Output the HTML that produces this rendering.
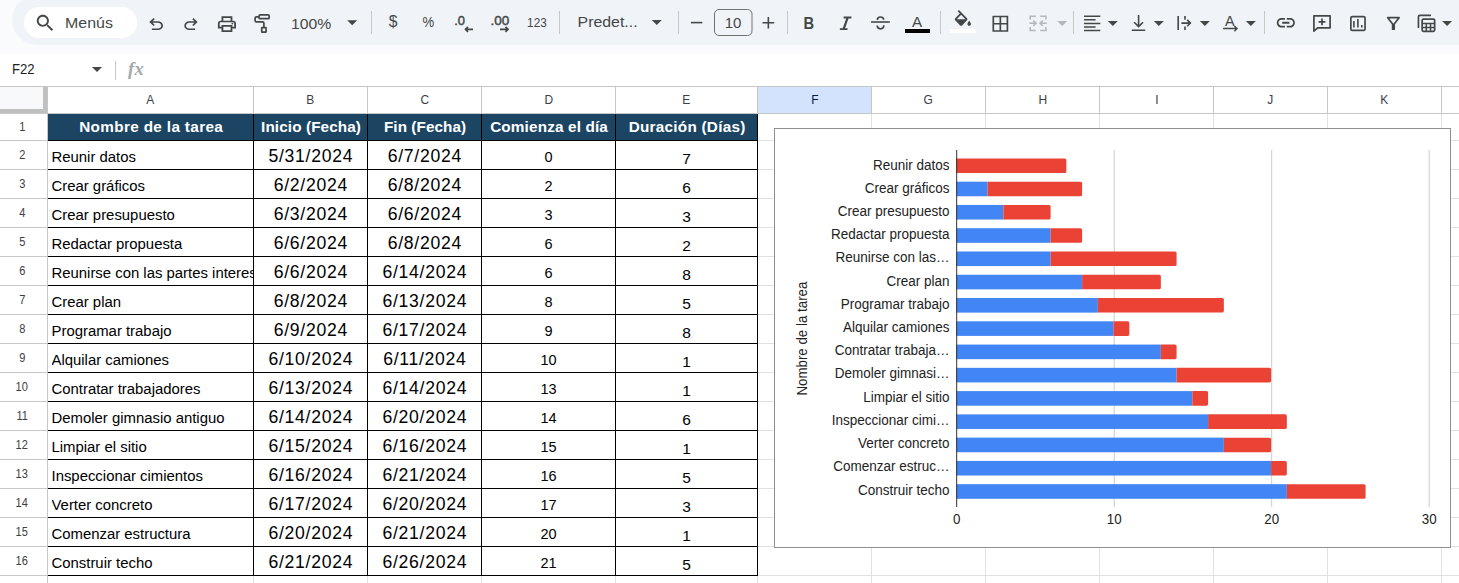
<!DOCTYPE html><html lang="es"><head><meta charset="utf-8"><title>Hoja</title><style>
*{box-sizing:border-box;margin:0;padding:0}
html,body{width:1459px;height:583px;overflow:hidden;background:#fff}
body{position:relative;font-family:"Liberation Sans",sans-serif;color:#000}
.abs{position:absolute}
#topbg{left:0;top:0;width:1459px;height:54px;background:#f9fbfd}
#pill{left:12px;top:-5.5px;width:1500px;height:50px;border-radius:25px;background:#f0f4f9}
#search{left:24px;top:7px;width:113px;height:31px;border-radius:16px;background:#fff}
.tb{position:absolute;color:#444746;font-size:14px;line-height:20px;top:13px;white-space:nowrap}
.sep{position:absolute;top:12px;width:1px;height:22px;background:#c7c7c7}
.ic{position:absolute;overflow:visible}
#fbar{left:0;top:54px;width:1459px;height:32px;background:#fff}
.colh{position:absolute;top:87px;height:26px;font-size:13px;line-height:26px;text-align:center;color:#3c4043;border-right:1px solid #c4c7c5;background:#fff}
.sq{display:inline-block;transform:scaleX(0.92)}
.rowh{position:absolute;left:0;width:47px;padding-right:3px;font-size:12px;text-align:center;color:#3c4043;background:#fff;border-bottom:1px solid #c4c7c5}
.gv{position:absolute;width:1px;background:#e1e1e1}
.gh{position:absolute;height:1px;background:#e1e1e1}
.cell{position:absolute;white-space:nowrap;overflow:hidden}
.hd{background:#1c4563;color:#fff;font-weight:bold;text-align:center}
.bl{position:absolute;background:#000}
</style></head><body>
<div class="abs" id="topbg"></div><div class="abs" id="pill"></div><div class="abs" id="search"></div>
<svg class="abs" style="left:0;top:0" width="1459" height="54" viewBox="0 0 1459 54" font-family="Liberation Sans, sans-serif"><path transform="translate(34.004,12.038) scale(0.93196,0.92053)" d="M15.5 14h-.79l-.28-.27C15.41 12.590 16 11.110 16 9.500 16 5.910 13.090 3 9.500 3S3 5.910 3 9.500 5.910 16 9.500 16c1.610 0 3.090-.590 4.230-1.570l.27.280v.790l5 4.990L20.490 19l-4.990-5zm-6 0C7.010 14 5 11.990 5 9.500S7.010 5 9.500 5 14 7.010 14 9.500 11.990 14 9.500 14z" fill="#444746" /><text x="65.1" y="28" font-size="15px" font-weight="normal" text-anchor="start" fill="#444746" textLength="47.8" lengthAdjust="spacingAndGlyphs" >Menús</text><path transform="translate(145.875,34.133) scale(0.02141,0.02017)" d="M280-200v-80h284q63 0 109.5-40T720-420q0-60-46.500-100T564-560H312l104 104-56 56-200-200 200-200 56 56-104 104h252q97 0 166.500 63T800-420q0 94-69.500 157T564-200H280Z" fill="#444746" /><path transform="translate(180.975,34.133) scale(0.02078,0.02017)" d="M396-200q-97 0-166.500-63T160-420q0-94 69.500-157T396-640h252L544-744l56-56 200 200-200 200-56-56 104-104H396q-63 0-109.500 40T240-420q0 60 46.500 100T396-280h284v80H396Z" fill="#444746" /><path transform="translate(216.090,34.500) scale(0.02262,0.02167)" d="M640-640v-120H320v120h-80v-200h480v200h-80Zm-480 80h640-640Zm560 100q17 0 28.500-11.500T760-500q0-17-11.500-28.500T720-540q-17 0-28.500 11.500T680-500q0 17 11.500 28.500T720-460Zm-80 260v-160H320v160h320Zm80 80H240v-160H80v-240q0-51 35-85.500t85-34.500h560q51 0 85.500 34.500T880-520v240H720v160Zm80-240v-160q0-17-11.500-28.500T760-560H200q-17 0-28.500 11.500T160-520v160h80v-80h480v80h80Z" fill="#444746" /><rect x="259.05" y="14.95" width="10.1" height="3.7" rx="1" fill="none" stroke="#444746" stroke-width="1.7"/><path d="M259 16.8H256.5Q255.1 16.8 255.1 18.2V20.5Q255.1 21.9 256.5 21.9H262.5Q263.9 21.9 263.9 23.3V27" fill="none" stroke="#444746" stroke-width="1.7" /><rect x="261.75" y="27.6" width="4.3" height="4.6" rx="0.4" fill="none" stroke="#444746" stroke-width="1.7"/><text x="291" y="28.8" font-size="15px" font-weight="normal" text-anchor="start" fill="#444746" textLength="40.3" lengthAdjust="spacingAndGlyphs" >100%</text><path d="M347.2 20.3h10l-5.0 5z" fill="#444746"/><rect x="371" y="11" width="1" height="23" fill="#c7c7c7"/><text x="393" y="27.2" font-size="15.6px" font-weight="normal" text-anchor="middle" fill="#444746" >$</text><text x="422.6" y="27" font-size="15.3px" font-weight="normal" text-anchor="start" fill="#444746" textLength="11.7" lengthAdjust="spacingAndGlyphs" >%</text><text x="454.2" y="25" font-size="13.4px" font-weight="normal" text-anchor="start" fill="#444746" textLength="10.8" lengthAdjust="spacingAndGlyphs" stroke="#444746" stroke-width="0.45">.0</text><path d="M473 29.3H465.5M468 26.8L465.5 29.3L468 31.8" fill="none" stroke="#444746" stroke-width="1.7" /><text x="490.5" y="25" font-size="13.4px" font-weight="normal" text-anchor="start" fill="#444746" textLength="18.8" lengthAdjust="spacingAndGlyphs" stroke="#444746" stroke-width="0.45">.00</text><path d="M500 29.3H508M505.5 26.8L508 29.3L505.5 31.8" fill="none" stroke="#444746" stroke-width="1.7" /><text x="527.1" y="26.7" font-size="13px" font-weight="normal" text-anchor="start" fill="#444746" textLength="19.7" lengthAdjust="spacingAndGlyphs" >123</text><rect x="559" y="11" width="1" height="23" fill="#c7c7c7"/><text x="577.6" y="26.9" font-size="15px" font-weight="normal" text-anchor="start" fill="#444746" textLength="60" lengthAdjust="spacingAndGlyphs" >Predet...</text><path d="M651.8 20.1h10l-5.0 5z" fill="#444746"/><rect x="678" y="11" width="1" height="23" fill="#c7c7c7"/><path d="M690.9 22.6H702.3" fill="none" stroke="#444746" stroke-width="1.6" /><rect x="714.5" y="9.5" width="37.5" height="26" rx="4.5" fill="none" stroke="#6f7271" stroke-width="1"/><text x="733.1" y="28" font-size="15px" font-weight="normal" text-anchor="middle" fill="#444746" >10</text><path d="M762.5 22.8H774.2M768.35 17V28.6" fill="none" stroke="#444746" stroke-width="1.6" /><rect x="787" y="11" width="1" height="23" fill="#c7c7c7"/><text x="803.4" y="28.6" font-size="16px" font-weight="bold" text-anchor="start" fill="#444746" textLength="10.6" lengthAdjust="spacingAndGlyphs" >B</text><path d="M843.6 17.5H851.4M839.9 29.2H847.5" fill="none" stroke="#444746" stroke-width="1.8" /><path d="M847.7 17.5L843.6 29.2" fill="none" stroke="#444746" stroke-width="2.2" /><path d="M871 22H889.8" fill="none" stroke="#444746" stroke-width="1.6" /><path d="M883.6 19.7C883.6 17.9 882.3 17 880.4 17C878.5 17 877.4 18 877.4 19.9" fill="none" stroke="#444746" stroke-width="1.7" /><path d="M877.2 25.6C877.2 27.7 878.5 28.8 880.5 28.8C882.5 28.8 883.8 27.7 883.8 25.3" fill="none" stroke="#444746" stroke-width="1.7" /><text x="917.1" y="26.6" font-size="15.2px" font-weight="normal" text-anchor="middle" fill="#444746" >A</text><rect x="905" y="29" width="25" height="4" fill="#000"/><rect x="940" y="11" width="1" height="23" fill="#c7c7c7"/><path transform="translate(952.100,9.900) scale(0.90000,0.93529)" d="M16.560 8.940L7.620 0 6.210 1.410l2.380 2.380-5.150 5.150c-.590.590-.590 1.540 0 2.120l5.500 5.500c.290.290.680.440 1.060.440s.770-.150 1.060-.440l5.500-5.500c.590-.580.590-1.530 0-2.120zM5.210 10L10 5.210 14.790 10H5.210zM19 11.500s-2 2.170-2 3.500c0 1.100.900 2 2 2s2-.900 2-2c0-1.330-2-3.500-2-3.500z" fill="#444746" /><rect x="950" y="29" width="26" height="4" fill="#fff"/><path d="M993.3 16.5H1007.4V31H993.3ZM1000.35 16.5V31M993.3 23.75H1007.4" fill="none" stroke="#444746" stroke-width="1.7" /><path d="M1035.8 16.2H1030.2V19.6M1030.2 27V30.5H1035.8M1029.3 23.3H1036M1033.3 20.6L1036 23.3L1033.3 26" fill="none" stroke="#b4b8bb" stroke-width="1.6" /><path d="M1040.3 16.2H1045.9V19.6M1045.9 27V30.5H1040.3M1046.8 23.3H1040.1M1042.8 20.6L1040.1 23.3L1042.8 26" fill="none" stroke="#b4b8bb" stroke-width="1.6" /><path d="M1057.2 20.9h10l-5.0 5z" fill="#b4b8bb"/><rect x="1073" y="11" width="1" height="23" fill="#c7c7c7"/><path d="M1084 16.3H1100.3M1084 19.85H1095.6M1084 23.4H1100.3M1084 26.95H1095.6M1084 30.5H1100.3" fill="none" stroke="#444746" stroke-width="1.5" /><path d="M1107.8 20.9h10l-5.0 5z" fill="#444746"/><path d="M1138.6 15V26.5M1134.2 22.2L1138.6 26.6L1143 22.2M1131.8 30.2H1145.3" fill="none" stroke="#444746" stroke-width="1.6" /><path d="M1153.8 20.9h10l-5.0 5z" fill="#444746"/><path d="M1178.2 16V30M1185 16V19.8M1185 26.4V30M1181.4 23.1H1190.3M1187.2 19.9L1190.4 23.1L1187.2 26.3" fill="none" stroke="#444746" stroke-width="1.6" /><path d="M1199.9 20.9h10l-5.0 5z" fill="#444746"/><text x="1229.7" y="25.8" font-size="14.4px" font-weight="normal" text-anchor="middle" fill="#444746" >A</text><path d="M1223.1 28.6H1237M1234.4 26L1237 28.6L1234.4 31.2" fill="none" stroke="#444746" stroke-width="1.5" /><path d="M1245.9 20.9h10l-5.0 5z" fill="#444746"/><rect x="1264" y="11" width="1" height="23" fill="#c7c7c7"/><path transform="translate(1274.990,11.180) scale(0.90500,0.96000)" d="M3.900 12c0-1.710 1.390-3.100 3.100-3.100h4V7H7c-2.760 0-5 2.240-5 5s2.240 5 5 5h4v-1.900H7c-1.710 0-3.100-1.390-3.100-3.100zM8 13h8v-2H8v2zm9-6h-4v1.900h4c1.710 0 3.100 1.390 3.100 3.100s-1.390 3.100-3.100 3.100h-4V17h4c2.760 0 5-2.240 5-5s-2.240-5-5-5z" fill="#444746" /><path d="M1313.9 15.8H1330.1V27.8H1317.6L1313.9 31.2Z" fill="none" stroke="#444746" stroke-width="1.7" stroke-linejoin="round"/><path d="M1318.6 21.8H1325.4M1322 18.4V25.2" fill="none" stroke="#444746" stroke-width="1.7" /><rect x="1350.85" y="16.55" width="14.2" height="13.9" rx="1.5" fill="none" stroke="#444746" stroke-width="1.7"/><path d="M1353.9 21V27.6M1357.9 18.9V27.6M1361.8 24.9V27.6" fill="none" stroke="#444746" stroke-width="1.6" /><path d="M1387.7 17.7H1399.1L1394.2 24V29.2H1392.6V24Z" fill="none" stroke="#444746" stroke-width="1.7" stroke-linejoin="round"/><path d="M1431 15.45H1420Q1418.45 15.45 1418.45 17V28" fill="none" stroke="#444746" stroke-width="1.7" /><rect x="1422.15" y="19.05" width="12.5" height="12.3" rx="1.3" fill="none" stroke="#444746" stroke-width="1.7"/><path d="M1422.2 23.4H1434.6M1422.2 27.4H1434.6M1426.3 23.4V31.3M1430.5 23.4V31.3" fill="none" stroke="#444746" stroke-width="1.5" /><path d="M1442.1 20.9h10l-5.0 5z" fill="#444746"/></svg>
<div class="abs" id="fbar"></div>
<div class="abs" style="left:12px;top:58.5px;font-size:14px;line-height:20px;color:#1f1f1f;transform:scaleX(0.94);transform-origin:0 0">F22</div>
<svg class="ic" style="left:92px;top:67px" width="10" height="5"><path d="M0 0h10l-5 5z" fill="#444746"/></svg>
<div class="abs" style="left:115px;top:61px;width:1px;height:19px;background:#c7c7c7"></div>
<div class="abs" style="left:128px;top:59px;font-family:'Liberation Serif',serif;font-style:italic;font-weight:bold;font-size:18.5px;line-height:20px;color:#a5a8ab;letter-spacing:0.3px">fx</div>
<div class="abs" style="left:0;top:86px;width:1459px;height:1px;background:#c4c7c5"></div>
<div class="abs" style="left:0;top:113px;width:1459px;height:1px;background:#c4c7c5"></div>
<div class="abs" style="left:0;top:87px;width:48px;height:26px;background:#f8f9fa"></div>
<div class="abs" style="left:43px;top:87px;width:4px;height:26px;background:#c0c0c0"></div>
<div class="abs" style="left:0;top:109px;width:47px;height:4px;background:#c0c0c0"></div>
<div class="abs" style="left:47px;top:87px;width:1px;height:496px;background:#c4c7c5"></div>
<div class="colh" style="left:48px;width:206px;"><span class="sq">A</span></div>
<div class="colh" style="left:254px;width:114px;"><span class="sq">B</span></div>
<div class="colh" style="left:368px;width:114px;"><span class="sq">C</span></div>
<div class="colh" style="left:482px;width:134px;"><span class="sq">D</span></div>
<div class="colh" style="left:616px;width:142px;"><span class="sq">E</span></div>
<div class="colh" style="left:758px;width:114px;background:#d3e3fd;color:#041e49;"><span class="sq">F</span></div>
<div class="colh" style="left:872px;width:114px;"><span class="sq">G</span></div>
<div class="colh" style="left:986px;width:114px;"><span class="sq">H</span></div>
<div class="colh" style="left:1100px;width:114px;"><span class="sq">I</span></div>
<div class="colh" style="left:1214px;width:114px;"><span class="sq">J</span></div>
<div class="colh" style="left:1328px;width:114px;"><span class="sq">K</span></div>
<div class="colh" style="left:1442px;width:114px;"><span class="sq">L</span></div>
<div class="rowh" style="top:114px;height:27px;line-height:26px"><span class="sq">1</span></div>
<div class="rowh" style="top:141px;height:29px;line-height:28px"><span class="sq">2</span></div>
<div class="rowh" style="top:170px;height:29px;line-height:28px"><span class="sq">3</span></div>
<div class="rowh" style="top:199px;height:29px;line-height:28px"><span class="sq">4</span></div>
<div class="rowh" style="top:228px;height:29px;line-height:28px"><span class="sq">5</span></div>
<div class="rowh" style="top:257px;height:29px;line-height:28px"><span class="sq">6</span></div>
<div class="rowh" style="top:286px;height:29px;line-height:28px"><span class="sq">7</span></div>
<div class="rowh" style="top:315px;height:29px;line-height:28px"><span class="sq">8</span></div>
<div class="rowh" style="top:344px;height:29px;line-height:28px"><span class="sq">9</span></div>
<div class="rowh" style="top:373px;height:29px;line-height:28px"><span class="sq">10</span></div>
<div class="rowh" style="top:402px;height:29px;line-height:28px"><span class="sq">11</span></div>
<div class="rowh" style="top:431px;height:29px;line-height:28px"><span class="sq">12</span></div>
<div class="rowh" style="top:460px;height:29px;line-height:28px"><span class="sq">13</span></div>
<div class="rowh" style="top:489px;height:29px;line-height:28px"><span class="sq">14</span></div>
<div class="rowh" style="top:518px;height:29px;line-height:28px"><span class="sq">15</span></div>
<div class="rowh" style="top:547px;height:29px;line-height:28px"><span class="sq">16</span></div>
<div class="rowh" style="top:576px;height:29px;line-height:28px"><span class="sq">17</span></div>
<div class="gv" style="left:253px;top:114px;height:469px"></div>
<div class="gv" style="left:367px;top:114px;height:469px"></div>
<div class="gv" style="left:481px;top:114px;height:469px"></div>
<div class="gv" style="left:615px;top:114px;height:469px"></div>
<div class="gv" style="left:757px;top:114px;height:469px"></div>
<div class="gv" style="left:871px;top:114px;height:469px"></div>
<div class="gv" style="left:985px;top:114px;height:469px"></div>
<div class="gv" style="left:1099px;top:114px;height:469px"></div>
<div class="gv" style="left:1213px;top:114px;height:469px"></div>
<div class="gv" style="left:1327px;top:114px;height:469px"></div>
<div class="gv" style="left:1441px;top:114px;height:469px"></div>
<div class="gh" style="left:48px;top:140px;width:1411px"></div>
<div class="gh" style="left:48px;top:169px;width:1411px"></div>
<div class="gh" style="left:48px;top:198px;width:1411px"></div>
<div class="gh" style="left:48px;top:227px;width:1411px"></div>
<div class="gh" style="left:48px;top:256px;width:1411px"></div>
<div class="gh" style="left:48px;top:285px;width:1411px"></div>
<div class="gh" style="left:48px;top:314px;width:1411px"></div>
<div class="gh" style="left:48px;top:343px;width:1411px"></div>
<div class="gh" style="left:48px;top:372px;width:1411px"></div>
<div class="gh" style="left:48px;top:401px;width:1411px"></div>
<div class="gh" style="left:48px;top:430px;width:1411px"></div>
<div class="gh" style="left:48px;top:459px;width:1411px"></div>
<div class="gh" style="left:48px;top:488px;width:1411px"></div>
<div class="gh" style="left:48px;top:517px;width:1411px"></div>
<div class="gh" style="left:48px;top:546px;width:1411px"></div>
<div class="gh" style="left:48px;top:575px;width:1411px"></div>
<div class="gh" style="left:48px;top:604px;width:1411px"></div>
<div class="cell hd" style="left:48px;top:114px;width:206px;height:27px;line-height:25.600000000000023px;font-size:15.3px;letter-spacing:0.35px;text-indent:0.35px">Nombre de la tarea</div>
<div class="cell hd" style="left:254px;top:114px;width:114px;height:27px;line-height:25.600000000000023px;font-size:15.3px;letter-spacing:0.1px;text-indent:0.1px">Inicio (Fecha)</div>
<div class="cell hd" style="left:368px;top:114px;width:114px;height:27px;line-height:25.600000000000023px;font-size:15.3px;letter-spacing:0.05px;text-indent:0.05px">Fin (Fecha)</div>
<div class="cell hd" style="left:482px;top:114px;width:134px;height:27px;line-height:25.600000000000023px;font-size:15.3px;letter-spacing:0.15px;text-indent:0.15px">Comienza el día</div>
<div class="cell hd" style="left:616px;top:114px;width:142px;height:27px;line-height:25.600000000000023px;font-size:15.3px;letter-spacing:0.25px;text-indent:0.25px">Duración (Días)</div>
<div class="cell" style="left:51.5px;top:141px;width:201.5px;height:28px;line-height:33.6px;font-size:14.9px">Reunir datos</div>
<div class="cell" style="left:254px;top:141px;width:113px;height:28px;line-height:31.6px;font-size:17.6px;letter-spacing:0.7px;text-indent:0.7px;text-align:center">5/31/2024</div>
<div class="cell" style="left:368px;top:141px;width:113px;height:28px;line-height:31.6px;font-size:17.6px;letter-spacing:0.7px;text-indent:0.7px;text-align:center">6/7/2024</div>
<div class="cell" style="left:482px;top:141px;width:133px;height:28px;line-height:33.8px;font-size:14.5px;text-align:center">0</div>
<div class="cell" style="left:616px;top:141px;width:141px;height:28px;line-height:35.6px;font-size:15.5px;text-align:center">7</div>
<div class="cell" style="left:51.5px;top:170px;width:201.5px;height:28px;line-height:33.6px;font-size:14.9px">Crear gráficos</div>
<div class="cell" style="left:254px;top:170px;width:113px;height:28px;line-height:31.6px;font-size:17.6px;letter-spacing:0.7px;text-indent:0.7px;text-align:center">6/2/2024</div>
<div class="cell" style="left:368px;top:170px;width:113px;height:28px;line-height:31.6px;font-size:17.6px;letter-spacing:0.7px;text-indent:0.7px;text-align:center">6/8/2024</div>
<div class="cell" style="left:482px;top:170px;width:133px;height:28px;line-height:33.8px;font-size:14.5px;text-align:center">2</div>
<div class="cell" style="left:616px;top:170px;width:141px;height:28px;line-height:35.6px;font-size:15.5px;text-align:center">6</div>
<div class="cell" style="left:51.5px;top:199px;width:201.5px;height:28px;line-height:33.6px;font-size:14.9px">Crear presupuesto</div>
<div class="cell" style="left:254px;top:199px;width:113px;height:28px;line-height:31.6px;font-size:17.6px;letter-spacing:0.7px;text-indent:0.7px;text-align:center">6/3/2024</div>
<div class="cell" style="left:368px;top:199px;width:113px;height:28px;line-height:31.6px;font-size:17.6px;letter-spacing:0.7px;text-indent:0.7px;text-align:center">6/6/2024</div>
<div class="cell" style="left:482px;top:199px;width:133px;height:28px;line-height:33.8px;font-size:14.5px;text-align:center">3</div>
<div class="cell" style="left:616px;top:199px;width:141px;height:28px;line-height:35.6px;font-size:15.5px;text-align:center">3</div>
<div class="cell" style="left:51.5px;top:228px;width:201.5px;height:28px;line-height:33.6px;font-size:14.9px">Redactar propuesta</div>
<div class="cell" style="left:254px;top:228px;width:113px;height:28px;line-height:31.6px;font-size:17.6px;letter-spacing:0.7px;text-indent:0.7px;text-align:center">6/6/2024</div>
<div class="cell" style="left:368px;top:228px;width:113px;height:28px;line-height:31.6px;font-size:17.6px;letter-spacing:0.7px;text-indent:0.7px;text-align:center">6/8/2024</div>
<div class="cell" style="left:482px;top:228px;width:133px;height:28px;line-height:33.8px;font-size:14.5px;text-align:center">6</div>
<div class="cell" style="left:616px;top:228px;width:141px;height:28px;line-height:35.6px;font-size:15.5px;text-align:center">2</div>
<div class="cell" style="left:51.5px;top:257px;width:201.5px;height:28px;line-height:33.6px;font-size:14.9px">Reunirse con las partes interesadas</div>
<div class="cell" style="left:254px;top:257px;width:113px;height:28px;line-height:31.6px;font-size:17.6px;letter-spacing:0.7px;text-indent:0.7px;text-align:center">6/6/2024</div>
<div class="cell" style="left:368px;top:257px;width:113px;height:28px;line-height:31.6px;font-size:17.6px;letter-spacing:0.7px;text-indent:0.7px;text-align:center">6/14/2024</div>
<div class="cell" style="left:482px;top:257px;width:133px;height:28px;line-height:33.8px;font-size:14.5px;text-align:center">6</div>
<div class="cell" style="left:616px;top:257px;width:141px;height:28px;line-height:35.6px;font-size:15.5px;text-align:center">8</div>
<div class="cell" style="left:51.5px;top:286px;width:201.5px;height:28px;line-height:33.6px;font-size:14.9px">Crear plan</div>
<div class="cell" style="left:254px;top:286px;width:113px;height:28px;line-height:31.6px;font-size:17.6px;letter-spacing:0.7px;text-indent:0.7px;text-align:center">6/8/2024</div>
<div class="cell" style="left:368px;top:286px;width:113px;height:28px;line-height:31.6px;font-size:17.6px;letter-spacing:0.7px;text-indent:0.7px;text-align:center">6/13/2024</div>
<div class="cell" style="left:482px;top:286px;width:133px;height:28px;line-height:33.8px;font-size:14.5px;text-align:center">8</div>
<div class="cell" style="left:616px;top:286px;width:141px;height:28px;line-height:35.6px;font-size:15.5px;text-align:center">5</div>
<div class="cell" style="left:51.5px;top:315px;width:201.5px;height:28px;line-height:33.6px;font-size:14.9px">Programar trabajo</div>
<div class="cell" style="left:254px;top:315px;width:113px;height:28px;line-height:31.6px;font-size:17.6px;letter-spacing:0.7px;text-indent:0.7px;text-align:center">6/9/2024</div>
<div class="cell" style="left:368px;top:315px;width:113px;height:28px;line-height:31.6px;font-size:17.6px;letter-spacing:0.7px;text-indent:0.7px;text-align:center">6/17/2024</div>
<div class="cell" style="left:482px;top:315px;width:133px;height:28px;line-height:33.8px;font-size:14.5px;text-align:center">9</div>
<div class="cell" style="left:616px;top:315px;width:141px;height:28px;line-height:35.6px;font-size:15.5px;text-align:center">8</div>
<div class="cell" style="left:51.5px;top:344px;width:201.5px;height:28px;line-height:33.6px;font-size:14.9px">Alquilar camiones</div>
<div class="cell" style="left:254px;top:344px;width:113px;height:28px;line-height:31.6px;font-size:17.6px;letter-spacing:0.7px;text-indent:0.7px;text-align:center">6/10/2024</div>
<div class="cell" style="left:368px;top:344px;width:113px;height:28px;line-height:31.6px;font-size:17.6px;letter-spacing:0.7px;text-indent:0.7px;text-align:center">6/11/2024</div>
<div class="cell" style="left:482px;top:344px;width:133px;height:28px;line-height:33.8px;font-size:14.5px;text-align:center">10</div>
<div class="cell" style="left:616px;top:344px;width:141px;height:28px;line-height:35.6px;font-size:15.5px;text-align:center">1</div>
<div class="cell" style="left:51.5px;top:373px;width:201.5px;height:28px;line-height:33.6px;font-size:14.9px">Contratar trabajadores</div>
<div class="cell" style="left:254px;top:373px;width:113px;height:28px;line-height:31.6px;font-size:17.6px;letter-spacing:0.7px;text-indent:0.7px;text-align:center">6/13/2024</div>
<div class="cell" style="left:368px;top:373px;width:113px;height:28px;line-height:31.6px;font-size:17.6px;letter-spacing:0.7px;text-indent:0.7px;text-align:center">6/14/2024</div>
<div class="cell" style="left:482px;top:373px;width:133px;height:28px;line-height:33.8px;font-size:14.5px;text-align:center">13</div>
<div class="cell" style="left:616px;top:373px;width:141px;height:28px;line-height:35.6px;font-size:15.5px;text-align:center">1</div>
<div class="cell" style="left:51.5px;top:402px;width:201.5px;height:28px;line-height:33.6px;font-size:14.9px">Demoler gimnasio antiguo</div>
<div class="cell" style="left:254px;top:402px;width:113px;height:28px;line-height:31.6px;font-size:17.6px;letter-spacing:0.7px;text-indent:0.7px;text-align:center">6/14/2024</div>
<div class="cell" style="left:368px;top:402px;width:113px;height:28px;line-height:31.6px;font-size:17.6px;letter-spacing:0.7px;text-indent:0.7px;text-align:center">6/20/2024</div>
<div class="cell" style="left:482px;top:402px;width:133px;height:28px;line-height:33.8px;font-size:14.5px;text-align:center">14</div>
<div class="cell" style="left:616px;top:402px;width:141px;height:28px;line-height:35.6px;font-size:15.5px;text-align:center">6</div>
<div class="cell" style="left:51.5px;top:431px;width:201.5px;height:28px;line-height:33.6px;font-size:14.9px">Limpiar el sitio</div>
<div class="cell" style="left:254px;top:431px;width:113px;height:28px;line-height:31.6px;font-size:17.6px;letter-spacing:0.7px;text-indent:0.7px;text-align:center">6/15/2024</div>
<div class="cell" style="left:368px;top:431px;width:113px;height:28px;line-height:31.6px;font-size:17.6px;letter-spacing:0.7px;text-indent:0.7px;text-align:center">6/16/2024</div>
<div class="cell" style="left:482px;top:431px;width:133px;height:28px;line-height:33.8px;font-size:14.5px;text-align:center">15</div>
<div class="cell" style="left:616px;top:431px;width:141px;height:28px;line-height:35.6px;font-size:15.5px;text-align:center">1</div>
<div class="cell" style="left:51.5px;top:460px;width:201.5px;height:28px;line-height:33.6px;font-size:14.9px">Inspeccionar cimientos</div>
<div class="cell" style="left:254px;top:460px;width:113px;height:28px;line-height:31.6px;font-size:17.6px;letter-spacing:0.7px;text-indent:0.7px;text-align:center">6/16/2024</div>
<div class="cell" style="left:368px;top:460px;width:113px;height:28px;line-height:31.6px;font-size:17.6px;letter-spacing:0.7px;text-indent:0.7px;text-align:center">6/21/2024</div>
<div class="cell" style="left:482px;top:460px;width:133px;height:28px;line-height:33.8px;font-size:14.5px;text-align:center">16</div>
<div class="cell" style="left:616px;top:460px;width:141px;height:28px;line-height:35.6px;font-size:15.5px;text-align:center">5</div>
<div class="cell" style="left:51.5px;top:489px;width:201.5px;height:28px;line-height:33.6px;font-size:14.9px">Verter concreto</div>
<div class="cell" style="left:254px;top:489px;width:113px;height:28px;line-height:31.6px;font-size:17.6px;letter-spacing:0.7px;text-indent:0.7px;text-align:center">6/17/2024</div>
<div class="cell" style="left:368px;top:489px;width:113px;height:28px;line-height:31.6px;font-size:17.6px;letter-spacing:0.7px;text-indent:0.7px;text-align:center">6/20/2024</div>
<div class="cell" style="left:482px;top:489px;width:133px;height:28px;line-height:33.8px;font-size:14.5px;text-align:center">17</div>
<div class="cell" style="left:616px;top:489px;width:141px;height:28px;line-height:35.6px;font-size:15.5px;text-align:center">3</div>
<div class="cell" style="left:51.5px;top:518px;width:201.5px;height:28px;line-height:33.6px;font-size:14.9px">Comenzar estructura</div>
<div class="cell" style="left:254px;top:518px;width:113px;height:28px;line-height:31.6px;font-size:17.6px;letter-spacing:0.7px;text-indent:0.7px;text-align:center">6/20/2024</div>
<div class="cell" style="left:368px;top:518px;width:113px;height:28px;line-height:31.6px;font-size:17.6px;letter-spacing:0.7px;text-indent:0.7px;text-align:center">6/21/2024</div>
<div class="cell" style="left:482px;top:518px;width:133px;height:28px;line-height:33.8px;font-size:14.5px;text-align:center">20</div>
<div class="cell" style="left:616px;top:518px;width:141px;height:28px;line-height:35.6px;font-size:15.5px;text-align:center">1</div>
<div class="cell" style="left:51.5px;top:547px;width:201.5px;height:28px;line-height:33.6px;font-size:14.9px">Construir techo</div>
<div class="cell" style="left:254px;top:547px;width:113px;height:28px;line-height:31.6px;font-size:17.6px;letter-spacing:0.7px;text-indent:0.7px;text-align:center">6/21/2024</div>
<div class="cell" style="left:368px;top:547px;width:113px;height:28px;line-height:31.6px;font-size:17.6px;letter-spacing:0.7px;text-indent:0.7px;text-align:center">6/26/2024</div>
<div class="cell" style="left:482px;top:547px;width:133px;height:28px;line-height:33.8px;font-size:14.5px;text-align:center">21</div>
<div class="cell" style="left:616px;top:547px;width:141px;height:28px;line-height:35.6px;font-size:15.5px;text-align:center">5</div>
<div class="bl" style="left:253px;top:114px;width:1px;height:462px"></div>
<div class="bl" style="left:367px;top:114px;width:1px;height:462px"></div>
<div class="bl" style="left:481px;top:114px;width:1px;height:462px"></div>
<div class="bl" style="left:615px;top:114px;width:1px;height:462px"></div>
<div class="bl" style="left:757px;top:114px;width:1px;height:462px"></div>
<div class="bl" style="left:48px;top:140px;width:710px;height:1px"></div>
<div class="bl" style="left:48px;top:169px;width:710px;height:1px"></div>
<div class="bl" style="left:48px;top:198px;width:710px;height:1px"></div>
<div class="bl" style="left:48px;top:227px;width:710px;height:1px"></div>
<div class="bl" style="left:48px;top:256px;width:710px;height:1px"></div>
<div class="bl" style="left:48px;top:285px;width:710px;height:1px"></div>
<div class="bl" style="left:48px;top:314px;width:710px;height:1px"></div>
<div class="bl" style="left:48px;top:343px;width:710px;height:1px"></div>
<div class="bl" style="left:48px;top:372px;width:710px;height:1px"></div>
<div class="bl" style="left:48px;top:401px;width:710px;height:1px"></div>
<div class="bl" style="left:48px;top:430px;width:710px;height:1px"></div>
<div class="bl" style="left:48px;top:459px;width:710px;height:1px"></div>
<div class="bl" style="left:48px;top:488px;width:710px;height:1px"></div>
<div class="bl" style="left:48px;top:517px;width:710px;height:1px"></div>
<div class="bl" style="left:48px;top:546px;width:710px;height:1px"></div>
<div class="bl" style="left:48px;top:575px;width:710px;height:1px"></div>
<div class="abs" style="left:774px;top:128px;width:677px;height:420px;background:#fff;border:1px solid #8f8f8f"></div>
<svg class="abs" style="left:0;top:0" width="1459" height="583" viewBox="0 0 1459 583" font-family="Liberation Sans, sans-serif"><path d="M1114.2 150V507" stroke="#cccccc" stroke-width="1" fill="none"/><path d="M1271.7 150V507" stroke="#cccccc" stroke-width="1" fill="none"/><path d="M1429.2 150V507" stroke="#cccccc" stroke-width="1" fill="none"/><path d="M956.10 158.40H1064.75Q1066.35 158.40 1066.35 160.00V171.40Q1066.35 173.00 1064.75 173.00H956.10Z" fill="#ea4335"/><text transform="translate(949.5,169.50) scale(0.964,1)" text-anchor="end" font-size="14px" fill="#222222">Reunir datos</text><rect x="956.10" y="181.67" width="31.50" height="14.6" fill="#4285f4"/><path d="M987.60 181.67H1080.50Q1082.10 181.67 1082.10 183.27V194.67Q1082.10 196.27 1080.50 196.27H987.60Z" fill="#ea4335"/><text transform="translate(949.5,192.72) scale(0.964,1)" text-anchor="end" font-size="14px" fill="#222222">Crear gráficos</text><rect x="956.10" y="204.94" width="47.25" height="14.6" fill="#4285f4"/><path d="M1003.35 204.94H1049.00Q1050.60 204.94 1050.60 206.54V217.94Q1050.60 219.54 1049.00 219.54H1003.35Z" fill="#ea4335"/><text transform="translate(949.5,215.94) scale(0.964,1)" text-anchor="end" font-size="14px" fill="#222222">Crear presupuesto</text><rect x="956.10" y="228.21" width="94.50" height="14.6" fill="#4285f4"/><path d="M1050.60 228.21H1080.50Q1082.10 228.21 1082.10 229.81V241.21Q1082.10 242.81 1080.50 242.81H1050.60Z" fill="#ea4335"/><text transform="translate(949.5,239.16) scale(0.964,1)" text-anchor="end" font-size="14px" fill="#222222">Redactar propuesta</text><rect x="956.10" y="251.48" width="94.50" height="14.6" fill="#4285f4"/><path d="M1050.60 251.48H1175.00Q1176.60 251.48 1176.60 253.08V264.48Q1176.60 266.08 1175.00 266.08H1050.60Z" fill="#ea4335"/><text transform="translate(949.5,262.38) scale(0.964,1)" text-anchor="end" font-size="14px" fill="#222222">Reunirse con las…</text><rect x="956.10" y="274.75" width="126.00" height="14.6" fill="#4285f4"/><path d="M1082.10 274.75H1159.25Q1160.85 274.75 1160.85 276.35V287.75Q1160.85 289.35 1159.25 289.35H1082.10Z" fill="#ea4335"/><text transform="translate(949.5,285.60) scale(0.964,1)" text-anchor="end" font-size="14px" fill="#222222">Crear plan</text><rect x="956.10" y="298.02" width="141.75" height="14.6" fill="#4285f4"/><path d="M1097.85 298.02H1222.25Q1223.85 298.02 1223.85 299.62V311.02Q1223.85 312.62 1222.25 312.62H1097.85Z" fill="#ea4335"/><text transform="translate(949.5,308.82) scale(0.964,1)" text-anchor="end" font-size="14px" fill="#222222">Programar trabajo</text><rect x="956.10" y="321.29" width="157.50" height="14.6" fill="#4285f4"/><path d="M1113.60 321.29H1127.75Q1129.35 321.29 1129.35 322.89V334.29Q1129.35 335.89 1127.75 335.89H1113.60Z" fill="#ea4335"/><text transform="translate(949.5,332.04) scale(0.964,1)" text-anchor="end" font-size="14px" fill="#222222">Alquilar camiones</text><rect x="956.10" y="344.56" width="204.75" height="14.6" fill="#4285f4"/><path d="M1160.85 344.56H1175.00Q1176.60 344.56 1176.60 346.16V357.56Q1176.60 359.16 1175.00 359.16H1160.85Z" fill="#ea4335"/><text transform="translate(949.5,355.26) scale(0.964,1)" text-anchor="end" font-size="14px" fill="#222222">Contratar trabaja…</text><rect x="956.10" y="367.83" width="220.50" height="14.6" fill="#4285f4"/><path d="M1176.60 367.83H1269.50Q1271.10 367.83 1271.10 369.43V380.83Q1271.10 382.43 1269.50 382.43H1176.60Z" fill="#ea4335"/><text transform="translate(949.5,378.48) scale(0.964,1)" text-anchor="end" font-size="14px" fill="#222222">Demoler gimnasi…</text><rect x="956.10" y="391.10" width="236.25" height="14.6" fill="#4285f4"/><path d="M1192.35 391.10H1206.50Q1208.10 391.10 1208.10 392.70V404.10Q1208.10 405.70 1206.50 405.70H1192.35Z" fill="#ea4335"/><text transform="translate(949.5,401.70) scale(0.964,1)" text-anchor="end" font-size="14px" fill="#222222">Limpiar el sitio</text><rect x="956.10" y="414.37" width="252.00" height="14.6" fill="#4285f4"/><path d="M1208.10 414.37H1285.25Q1286.85 414.37 1286.85 415.97V427.37Q1286.85 428.97 1285.25 428.97H1208.10Z" fill="#ea4335"/><text transform="translate(949.5,424.92) scale(0.964,1)" text-anchor="end" font-size="14px" fill="#222222">Inspeccionar cimi…</text><rect x="956.10" y="437.64" width="267.75" height="14.6" fill="#4285f4"/><path d="M1223.85 437.64H1269.50Q1271.10 437.64 1271.10 439.24V450.64Q1271.10 452.24 1269.50 452.24H1223.85Z" fill="#ea4335"/><text transform="translate(949.5,448.14) scale(0.964,1)" text-anchor="end" font-size="14px" fill="#222222">Verter concreto</text><rect x="956.10" y="460.91" width="315.00" height="14.6" fill="#4285f4"/><path d="M1271.10 460.91H1285.25Q1286.85 460.91 1286.85 462.51V473.91Q1286.85 475.51 1285.25 475.51H1271.10Z" fill="#ea4335"/><text transform="translate(949.5,471.36) scale(0.964,1)" text-anchor="end" font-size="14px" fill="#222222">Comenzar estruc…</text><rect x="956.10" y="484.18" width="330.75" height="14.6" fill="#4285f4"/><path d="M1286.85 484.18H1364.00Q1365.60 484.18 1365.60 485.78V497.18Q1365.60 498.78 1364.00 498.78H1286.85Z" fill="#ea4335"/><text transform="translate(949.5,494.58) scale(0.964,1)" text-anchor="end" font-size="14px" fill="#222222">Construir techo</text><path d="M956.7 150V507" stroke="#333333" stroke-width="1" fill="none"/><text transform="translate(956.7,523.9) scale(0.952,1)" text-anchor="middle" font-size="14px" fill="#222222">0</text><text transform="translate(1114.2,523.9) scale(0.952,1)" text-anchor="middle" font-size="14px" fill="#222222">10</text><text transform="translate(1271.7,523.9) scale(0.952,1)" text-anchor="middle" font-size="14px" fill="#222222">20</text><text transform="translate(1429.2,523.9) scale(0.952,1)" text-anchor="middle" font-size="14px" fill="#222222">30</text><text transform="translate(807.2,338.6) rotate(-90) scale(0.952,1)" text-anchor="middle" font-size="14px" fill="#222222">Nombre de la tarea</text></svg>
</body></html>
